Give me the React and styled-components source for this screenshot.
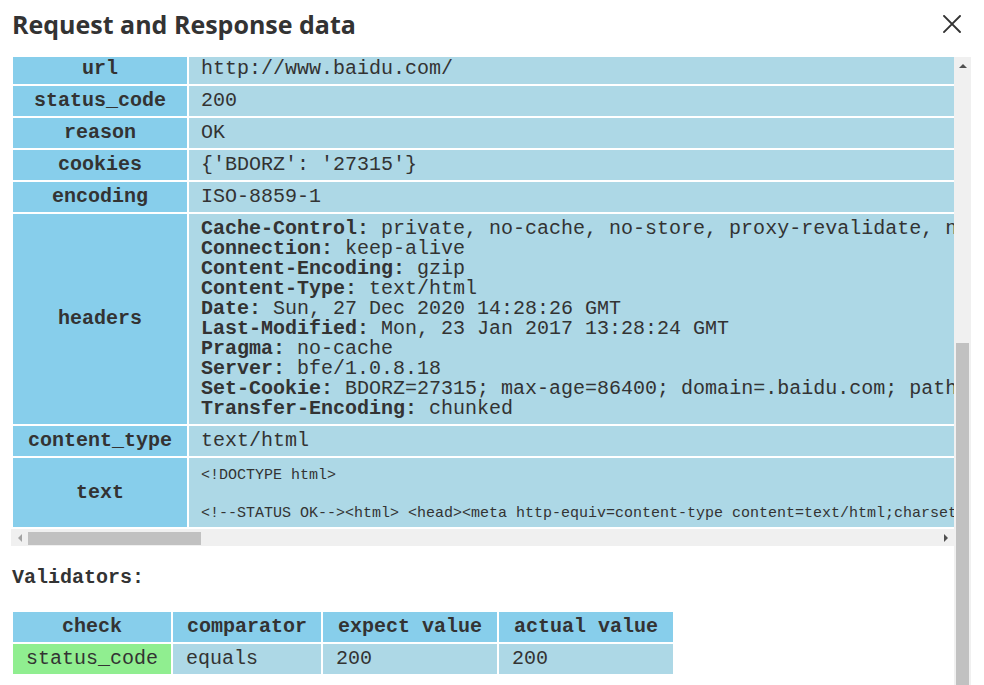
import React from "react";
import styled, { createGlobalStyle } from "styled-components";

const GlobalStyle = createGlobalStyle`
  html, body {
    margin: 0;
    padding: 0;
    background: #fff;
    overflow: hidden;
  }
  body {
    font-family: "Liberation Mono", "DejaVu Sans Mono", monospace;
    color: #333;
  }
`;

const Dialog = styled.div`
  display: flex;
  flex-direction: column;
  height: 100vh;
  padding-right: 13px;
  box-sizing: border-box;
`;

const Header = styled.div`
  display: flex;
  align-items: center;
  justify-content: space-between;
  height: 48px;
  margin-bottom: 9px;
  padding: 0 9px 0 12px;
`;

const Title = styled.h2`
  margin: 0;
  font-family: "Open Sans", "Noto Sans", sans-serif;
  font-size: 25px;
  font-weight: 700;
  color: #333;
`;

const CloseBtn = styled.button`
  border: 0;
  background: none;
  padding: 0;
  width: 20px;
  height: 20px;
  display: flex;
  align-items: center;
  justify-content: center;
  cursor: pointer;
`;

const BodyRow = styled.div`
  flex: 1;
  display: flex;
  min-height: 0;
`;

const Main = styled.div`
  flex: 1;
  min-width: 0;
  overflow: hidden;
  padding-left: 11px;
`;

/* the body is shown scrolled a few pixels into the response table */
const TableClip = styled.div`
  overflow: hidden;
  margin-top: ${(p) => -p.$scroll}px;
`;

const DataTable = styled.table`
  border-collapse: separate;
  border-spacing: 2px;
  font-size: 20px;
  line-height: 24px;
`;

const KeyCell = styled.td`
  background: #87ceeb;
  font-weight: 700;
  text-align: center;
  padding: 3px 12px;
  width: 150px;
  min-width: 150px;
  vertical-align: middle;
`;

const ValueCell = styled.td`
  background: #add8e6;
  padding: 3px 12px;
  white-space: pre;
  vertical-align: middle;
`;

const HeaderLines = styled.div`
  line-height: 20px;
  padding: 2px 0;
`;

const HeaderName = styled.b`
  font-weight: 700;
`;

const RawText = styled.pre`
  margin: 0;
  padding: 5px 0 1px;
  font-family: "Liberation Mono", monospace;
  font-size: 15px;
  line-height: 19px;
`;

const HBar = styled.div`
  display: flex;
  align-items: center;
  height: 17px;
  background: #f0f0f0;
`;

const HArrowBox = styled.div`
  width: 17px;
  height: 17px;
  display: flex;
  align-items: center;
  justify-content: center;
`;

const HThumbTrack = styled.div`
  flex: 1;
  height: 13px;
  margin-top: 1px;
`;

const HThumb = styled.div`
  height: 100%;
  background: #c1c1c1;
`;

const ArrowLeft = styled.span`
  width: 0;
  height: 0;
  border-top: 4px solid transparent;
  border-bottom: 4px solid transparent;
  border-right: 4px solid ${(p) => (p.$dim ? "#a3a3a3" : "#505050")};
`;

const ArrowRight = styled.span`
  width: 0;
  height: 0;
  border-top: 4px solid transparent;
  border-bottom: 4px solid transparent;
  border-left: 4px solid #505050;
`;

const ArrowUp = styled.span`
  width: 0;
  height: 0;
  border-left: 4px solid transparent;
  border-right: 4px solid transparent;
  border-bottom: 4px solid #505050;
`;

const SectionTitle = styled.div`
  font-size: 20px;
  font-weight: 700;
  line-height: 24px;
  margin: 20px 0 20px 1px;
`;

const ValTable = styled.table`
  border-collapse: separate;
  border-spacing: 2px;
  font-size: 20px;
  line-height: 24px;
  white-space: nowrap;
`;

const ValTh = styled.th`
  background: #87ceeb;
  font-weight: 700;
  padding: 3px 0;
  text-align: center;
  width: ${(p) => p.$w}px;
`;

const ValTd = styled.td`
  background: ${(p) => (p.$pass ? "#90ee90" : "#add8e6")};
  padding: 3px 13px;
  text-align: left;
`;

const VBar = styled.div`
  width: 17px;
  background: #f0f0f0;
  display: flex;
  flex-direction: column;
  align-items: center;
`;

const VArrowBox = styled.div`
  height: 17px;
  display: flex;
  align-items: center;
  justify-content: center;
`;

const VThumb = styled.div`
  width: 13px;
  flex: 1;
  background: #c1c1c1;
`;

const headers = [
  ["Cache-Control", "private, no-cache, no-store, proxy-revalidate, no-transform"],
  ["Connection", "keep-alive"],
  ["Content-Encoding", "gzip"],
  ["Content-Type", "text/html"],
  ["Date", "Sun, 27 Dec 2020 14:28:26 GMT"],
  ["Last-Modified", "Mon, 23 Jan 2017 13:28:24 GMT"],
  ["Pragma", "no-cache"],
  ["Server", "bfe/1.0.8.18"],
  ["Set-Cookie", "BDORZ=27315; max-age=86400; domain=.baidu.com; path=/"],
  ["Transfer-Encoding", "chunked"],
];

const rawHtml =
  "<!DOCTYPE html>\n\n" +
  "<!--STATUS OK--><html> <head><meta http-equiv=content-type content=text/html;charset=utf-8><meta http-equiv=X-UA-Compatible content=IE=Edge><meta content=always name=referrer><link rel=stylesheet type=text/css href=http://s1.bdstatic.com/r/www/cache/bdorz/baidu.min.css><title>百度一下，你就知道</title></head> <body link=#0000cc>";

const rows = [
  ["url", "http://www.baidu.com/"],
  ["status_code", "200"],
  ["reason", "OK"],
  ["cookies", "{'BDORZ': '27315'}"],
  ["encoding", "ISO-8859-1"],
];

const columns = [
  ["check", 157],
  ["comparator", 148],
  ["expect value", 174],
  ["actual value", 174],
];

const validators = [
  { check: "status_code", comparator: "equals", expect: "200", actual: "200", pass: true },
];

const CloseIcon = () => (
  <svg width="18" height="18" viewBox="0 0 18 18">
    <path d="M1 1 L17 17 M17 1 L1 17" stroke="#333" strokeWidth="1.9" strokeLinecap="square" />
  </svg>
);

const App = () => {
  return (
    <>
      <GlobalStyle />
      <Dialog>
        <Header>
          <Title>Request and Response data</Title>
          <CloseBtn aria-label="close">
            <CloseIcon />
          </CloseBtn>
        </Header>
        <BodyRow>
          <Main>
            <TableClip $scroll={5}>
              <DataTable>
                <tbody>
                  {rows.map(([k, v]) => (
                    <tr key={k}>
                      <KeyCell>{k}</KeyCell>
                      <ValueCell>{v}</ValueCell>
                    </tr>
                  ))}
                  <tr>
                    <KeyCell>headers</KeyCell>
                    <ValueCell>
                      <HeaderLines>
                        {headers.map(([name, val]) => (
                          <div key={name}>
                            <HeaderName>{name}:</HeaderName> {val}
                          </div>
                        ))}
                      </HeaderLines>
                    </ValueCell>
                  </tr>
                  <tr>
                    <KeyCell>content_type</KeyCell>
                    <ValueCell>text/html</ValueCell>
                  </tr>
                  <tr>
                    <KeyCell>text</KeyCell>
                    <ValueCell>
                      <RawText>{rawHtml}</RawText>
                    </ValueCell>
                  </tr>
                </tbody>
              </DataTable>
            </TableClip>
            <HBar>
              <HArrowBox>
                <ArrowLeft $dim />
              </HArrowBox>
              <HThumbTrack>
                <HThumb style={{ width: "19%" }} />
              </HThumbTrack>
              <HArrowBox>
                <ArrowRight />
              </HArrowBox>
            </HBar>
            <SectionTitle>Validators:</SectionTitle>
            <ValTable>
              <thead>
                <tr>
                  {columns.map(([label, w]) => (
                    <ValTh key={label} $w={w}>
                      {label}
                    </ValTh>
                  ))}
                </tr>
              </thead>
              <tbody>
                {validators.map((v) => (
                  <tr key={v.check}>
                    <ValTd $pass={v.pass}>{v.check}</ValTd>
                    <ValTd>{v.comparator}</ValTd>
                    <ValTd>{v.expect}</ValTd>
                    <ValTd>{v.actual}</ValTd>
                  </tr>
                ))}
              </tbody>
            </ValTable>
          </Main>
          <VBar>
            <VArrowBox>
              <ArrowUp />
            </VArrowBox>
            <VThumb style={{ marginTop: 269 }} />
          </VBar>
        </BodyRow>
      </Dialog>
    </>
  );
};

export default App;
